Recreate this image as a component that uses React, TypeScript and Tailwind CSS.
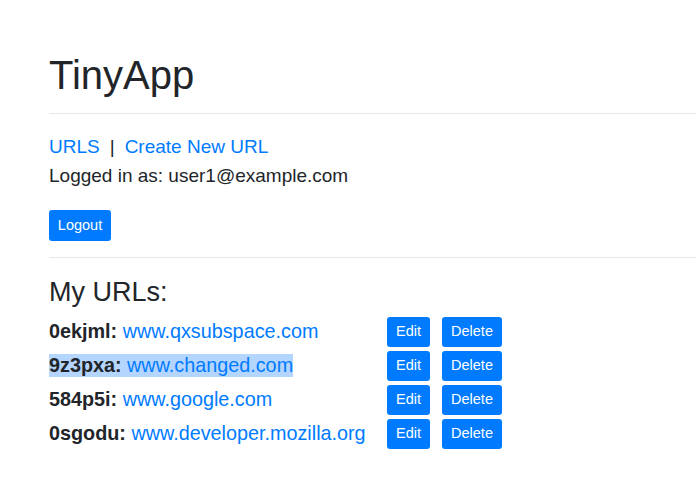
import React from "react";

const rows = [
  { id: "0ekjml", url: "www.qxsubspace.com", selected: false },
  { id: "9z3pxa", url: "www.changed.com", selected: true },
  { id: "584p5i", url: "www.google.com", selected: false },
  { id: "0sgodu", url: "www.developer.mozilla.org", selected: false },
];

export default function App() {
  return (
    <div className="min-h-[499px] w-full overflow-hidden bg-white pl-[49px] pt-[51px] font-['Liberation_Sans',Arial,sans-serif] text-[#212529]">
      <h1 className="text-[40px] leading-[48px] font-normal">TinyApp</h1>
      <hr className="mt-[14px] border-0 border-t border-[#e6e6e6]" />
      <div className="mt-[19px] text-[19px] leading-[28.5px]">
        <div>
          <a href="#" className="text-[#007bff]">URLS</a>
          <span className="mx-[10px]">|</span>
          <a href="#" className="text-[#007bff]">Create New URL</a>
        </div>
        <div>Logged in as: user1@example.com</div>
      </div>
      <button className="mt-[20px] flex h-[31px] w-[62px] items-center justify-center rounded-[3px] bg-[#007bff] text-[14.5px] text-white">
        Logout
      </button>
      <hr className="mt-[16px] border-0 border-t border-[#e6e6e6]" />
      <h2 className="mt-[18px] text-[27px] leading-[32px] font-normal">My URLs:</h2>
      <div className="mt-[9px] flex flex-col gap-[4px]">
        {rows.map((r) => (
          <div key={r.id} className="flex h-[30px] items-center">
            <div className="w-[338px] text-[19.8px]">
              <span
                className={
                  r.selected
                    ? "inline-block h-[23px] bg-[#b4d5fe] leading-[23px]"
                    : "inline-block h-[23px] leading-[23px]"
                }
              >
                <b className="font-bold">{r.id}:</b>{" "}
                <a href="#" className="text-[#007bff]">{r.url}</a>
              </span>
            </div>
            <button className="flex h-[30px] w-[43px] items-center justify-center rounded-[3px] bg-[#007bff] text-[14.5px] text-white">
              Edit
            </button>
            <button className="ml-[12px] flex h-[30px] w-[60px] items-center justify-center rounded-[3px] bg-[#007bff] text-[14.5px] text-white">
              Delete
            </button>
          </div>
        ))}
      </div>
    </div>
  );
}
